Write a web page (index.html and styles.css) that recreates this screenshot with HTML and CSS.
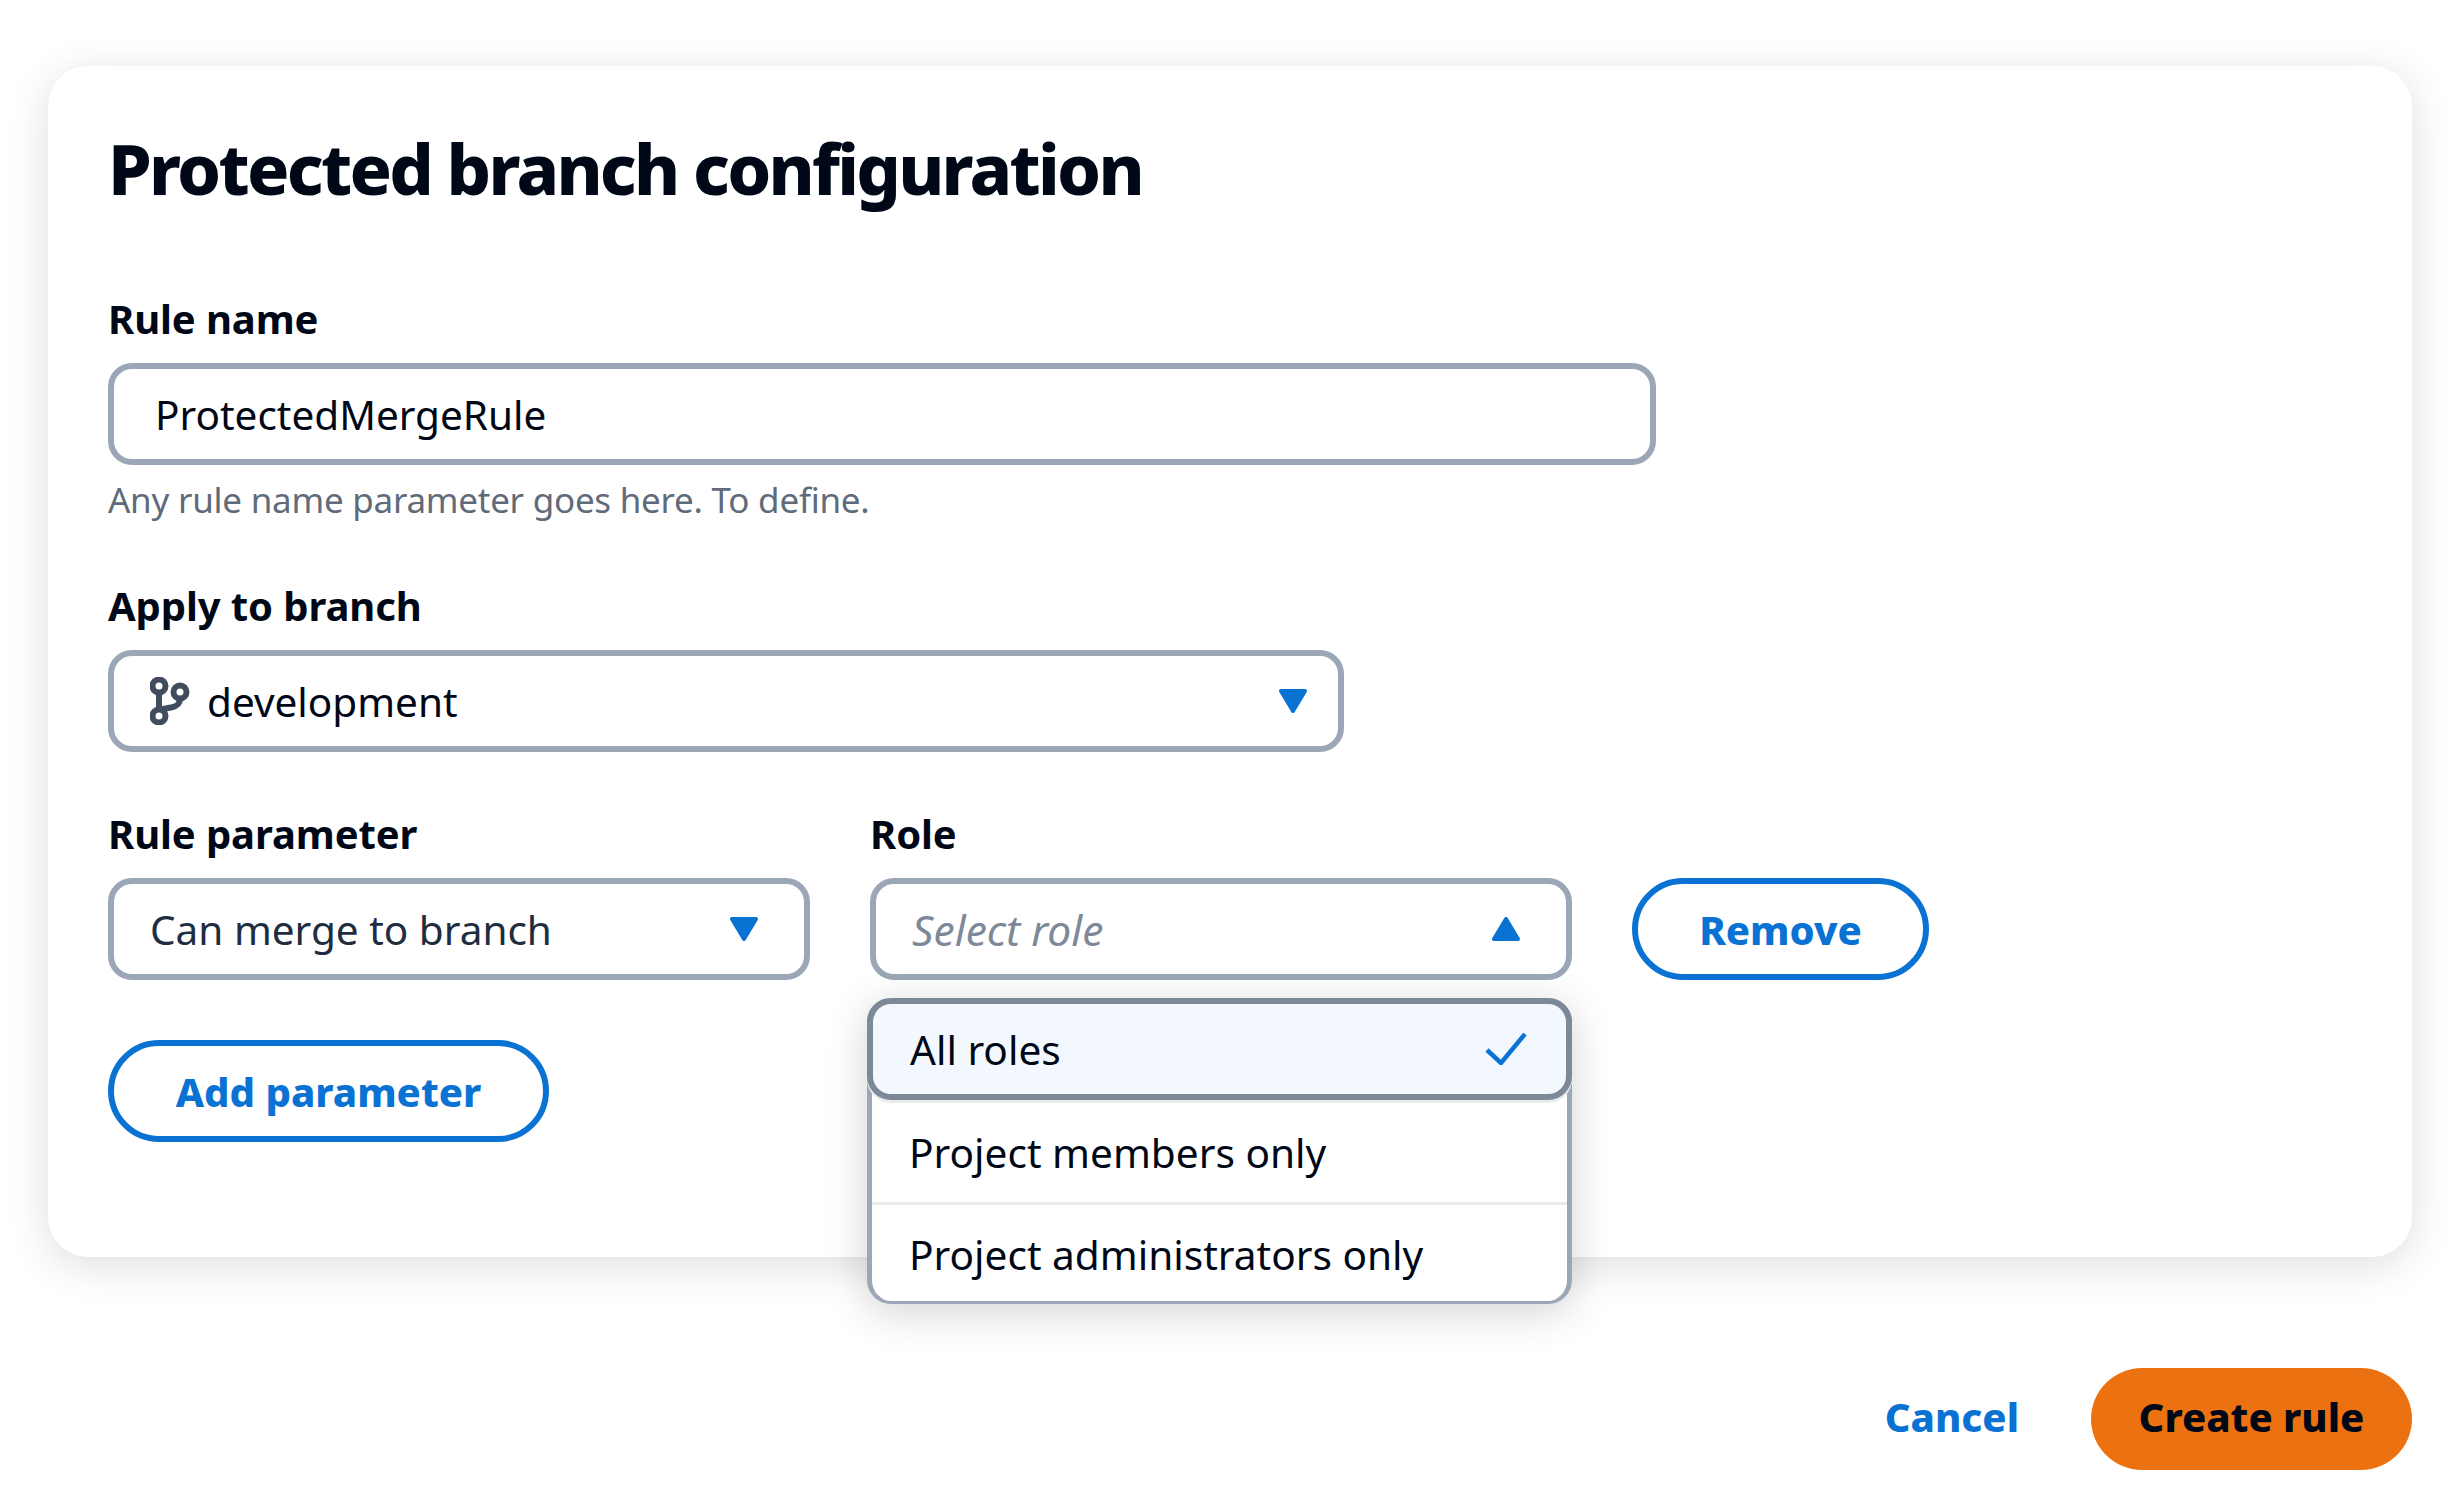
FILE: index.html
```html
<!DOCTYPE html>
<html lang="en">
<head>
    <meta charset="UTF-8">
    <meta name="viewport" content="width=device-width, initial-scale=1.0">
    <title>Protected branch configuration</title>
    <link rel="stylesheet" href="styles.css">
</head>
<body>

<div class="page">
    <section class="card">
        <h1>Protected branch configuration</h1>

        <div class="form-group">
            <label class="field-label">Rule name</label>
            <div class="field field-input">ProtectedMergeRule</div>
            <p class="help-text">Any rule name parameter goes here. To define.</p>
        </div>

        <div class="form-group">
            <label class="field-label">Apply to branch</label>
            <div class="field field-select field-branch">
                <span class="select-value">
                    <svg class="branch-icon" viewBox="0 0 40 48" width="40" height="48" fill="none" stroke="#414d5c" stroke-width="6">
                        <circle cx="9" cy="9" r="6.5"/>
                        <circle cx="30" cy="15" r="6.5"/>
                        <circle cx="9" cy="39" r="6.5"/>
                        <path d="M9 15.5V32.5"/>
                        <path d="M30 21.5C30 28 26 29.5 21 30.5L10 32.5"/>
                    </svg>
                    development
                </span>
                <svg class="caret" viewBox="0 0 30 24" width="30" height="24"><path d="M3 2H27L15 22Z" fill="#0972d3" stroke="#0972d3" stroke-width="4" stroke-linejoin="round"/></svg>
            </div>
        </div>

        <div class="param-row">
            <div>
                <label class="field-label">Rule parameter</label>
                <div class="field field-select">
                    <span class="select-value value-muted">Can merge to branch</span>
                    <svg class="caret" viewBox="0 0 30 24" width="30" height="24"><path d="M3 2H27L15 22Z" fill="#0972d3" stroke="#0972d3" stroke-width="4" stroke-linejoin="round"/></svg>
                </div>
            </div>
            <div class="role-col">
                <label class="field-label">Role</label>
                <div class="field field-select">
                    <span class="select-value placeholder">Select role</span>
                    <svg class="caret" viewBox="0 0 30 24" width="30" height="24"><path d="M3 22H27L15 2Z" fill="#0972d3" stroke="#0972d3" stroke-width="4" stroke-linejoin="round"/></svg>
                </div>
                <ul class="dropdown">
                    <li class="option option-selected">
                        All roles
                        <svg viewBox="0 0 42 32" width="42" height="32" fill="none" stroke="#0972d3" stroke-width="4.5"><path d="M2 17L16 30L40 1"/></svg>
                    </li>
                    <li class="option">Project members only</li>
                    <li class="option">Project administrators only</li>
                </ul>
            </div>
            <button class="btn btn-outline btn-remove">Remove</button>
        </div>

        <button class="btn btn-outline btn-add">Add parameter</button>
    </section>

    <footer class="actions">
        <a href="#" class="link-cancel">Cancel</a>
        <button class="btn btn-primary">Create rule</button>
    </footer>
</div>

</body>
</html>
```

FILE: styles.css
```css
* {
    box-sizing: border-box;
}
body {
    font-family: "Noto Sans", Arial, sans-serif;
    background-color: #fff;
    color: #000716;
    margin: 0;
    padding: 0;
}
.page {
    padding: 66px 48px 0;
}
.card {
    background-color: #fff;
    border-radius: 40px;
    box-shadow: 0 8px 40px 2px rgba(0, 7, 22, 0.12);
    height: 1191px;
    padding: 60px 60px 0;
}
h1 {
    font-size: 70px;
    line-height: 85px;
    font-weight: 800;
    letter-spacing: -2.7px;
    margin: 0 0 82px;
}
.form-group {
    margin-bottom: 56px;
}
.field-label {
    display: block;
    font-size: 40px;
    line-height: 52px;
    font-weight: 700;
    letter-spacing: -0.1px;
    margin-bottom: 18px;
}
.field {
    display: flex;
    align-items: center;
    height: 102px;
    background-color: #fff;
    border: 6px solid #9ba7b6;
    border-radius: 24px;
    font-size: 40.5px;
}
.field-input {
    width: 1548px;
    padding-left: 41px;
}
.help-text {
    font-size: 35px;
    line-height: 48px;
    letter-spacing: -0.25px;
    color: #5f6b7a;
    margin: 11px 0 1px;
}
.field-select {
    justify-content: space-between;
    padding: 0 45px 0 36px;
}
.field-branch {
    width: 1236px;
    padding-right: 30px;
}
.select-value {
    display: flex;
    align-items: center;
}
.branch-icon {
    margin-right: 17px;
}
.value-muted {
    color: #1f2d40;
}
.placeholder {
    color: #7d8998;
    font-style: italic;
    font-size: 42.5px;
}
.param-row {
    display: grid;
    grid-template-columns: 702px 702px 297px;
    column-gap: 60px;
    align-items: end;
    margin-bottom: 60px;
}
.role-col {
    position: relative;
}
.dropdown {
    position: absolute;
    top: 190px;
    left: -3px;
    right: 0;
    height: 306px;
    list-style: none;
    margin: 0;
    padding: 0;
    background-color: #fff;
    border: solid #9ba7b6;
    border-width: 0 5px 3px;
    border-radius: 24px;
    box-shadow: 0 8px 40px 2px rgba(0, 7, 22, 0.16);
    font-size: 40.6px;
}
.option {
    display: flex;
    align-items: center;
    justify-content: space-between;
    height: 102px;
    padding: 0 33px 0 37px;
    border-bottom: 3px solid #e9ebed;
}
.option:last-child {
    height: 98px;
    border-bottom: 0;
}
.option-selected {
    height: 102px;
    margin: 0 -5px 3px;
    padding: 0 39px 0 37px;
    background-color: #f2f8fd;
    border: 6px solid #7d8998;
    border-radius: 24px;
    box-shadow: 0 3px 0 #e9ebed;
}
.btn {
    font-family: inherit;
    font-size: 40px;
    font-weight: 800;
    height: 102px;
    border-radius: 51px;
    cursor: pointer;
}
.btn-outline {
    background-color: #fff;
    border: 6px solid #0972d3;
    color: #0972d3;
}
.btn-add {
    display: block;
    width: 441px;
}
.actions {
    display: flex;
    justify-content: flex-end;
    align-items: center;
    gap: 72px;
    margin-top: 111px;
}
.link-cancel {
    font-size: 40px;
    font-weight: 800;
    color: #0972d3;
    text-decoration: none;
    margin-bottom: 6px;
}
.btn-primary {
    width: 321px;
    padding-bottom: 6px;
    background-color: #ec7211;
    border: none;
    color: #000716;
}
```
